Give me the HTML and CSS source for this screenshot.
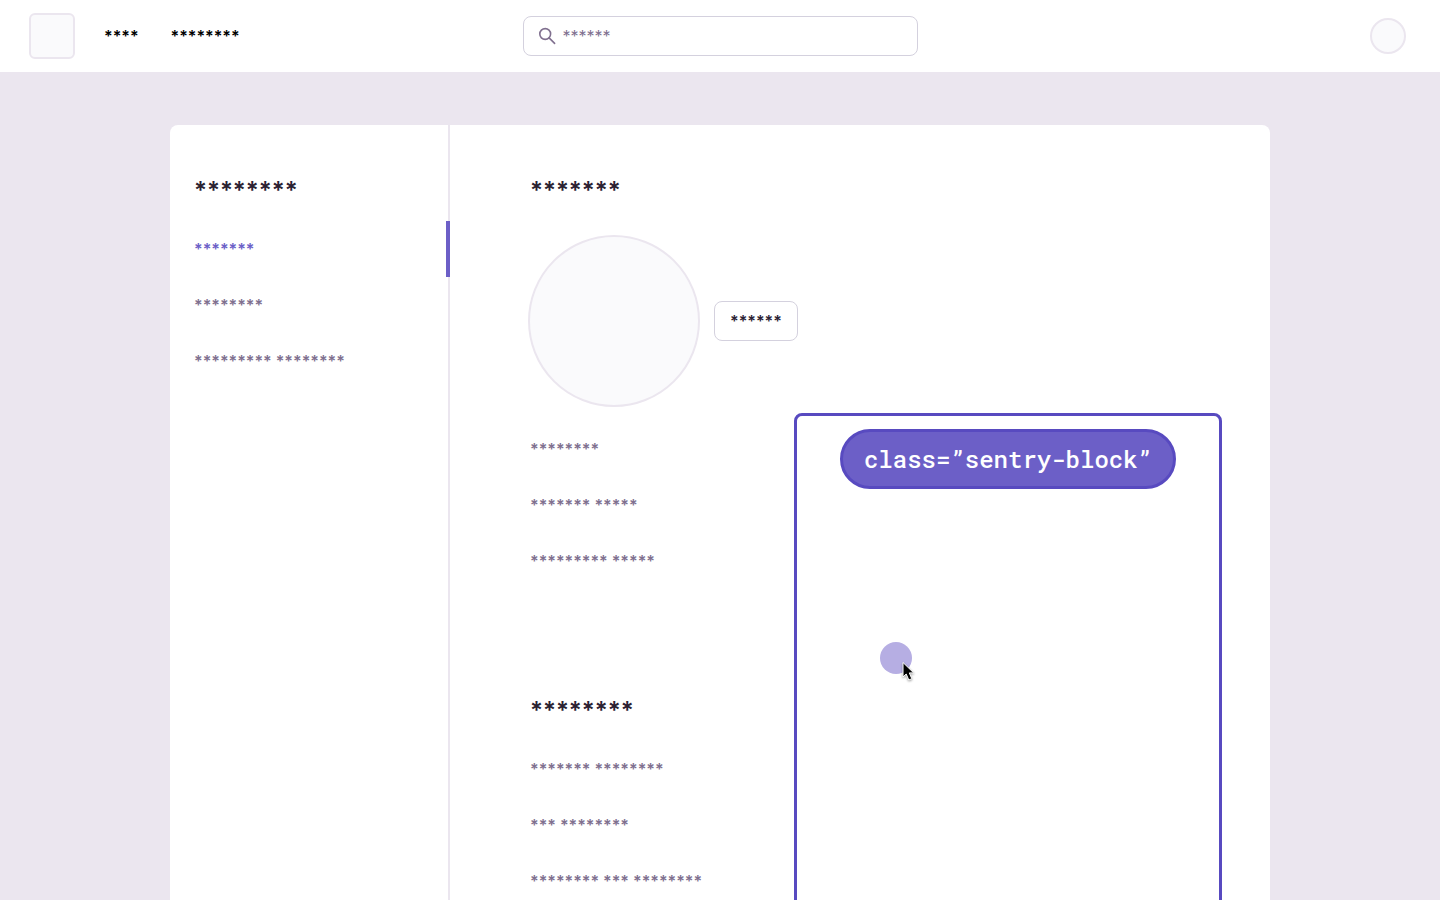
FILE: index.html
```html
<!DOCTYPE html>
<html lang="en">
<head>
<meta charset="utf-8">
<meta name="viewport" content="width=device-width, initial-scale=1">
<title>Account</title>
<link rel="stylesheet" href="styles.css">
</head>
<body>
<div class="page">
  <header class="topbar">
    <div class="topbar-start">
      <div class="logo"></div>
      <nav class="topnav">
        <a class="topnav-link" href="#">****</a>
        <a class="topnav-link" href="#">********</a>
      </nav>
    </div>
    <label class="search">
      <svg class="search-icon" viewBox="0 0 18 18" aria-hidden="true"><circle cx="6.2" cy="7" r="5.4"/><path d="M10.1 10.9L15.6 16.4"/></svg>
      <input class="search-input" type="text" placeholder="******" aria-label="Search">
    </label>
    <div class="topbar-end"><div class="user"></div></div>
  </header>

  <div class="card">
    <aside class="sidebar">
      <h2 class="title">********</h2>
      <nav class="menu">
        <a class="row row-active" href="#">*******</a>
        <a class="row" href="#">********</a>
        <a class="row" href="#">********* ********</a>
      </nav>
    </aside>
    <main class="content">
      <h1 class="title">*******</h1>
      <div class="profile">
        <div class="avatar"></div>
        <button class="button" type="button">******</button>
      </div>
      <div class="details">
        <div class="fields">
          <div class="row">********</div>
          <div class="row">******* *****</div>
          <div class="row">********* *****</div>
          <h2 class="title title-next">********</h2>
          <div class="row">******* ********</div>
          <div class="row">*** ********</div>
          <div class="row">******** *** ********</div>
        </div>
        <section class="block">
          <div class="tag">class=”sentry-block”</div>
          <div class="pointer">
            <svg class="cursor" viewBox="0 0 16 22" aria-hidden="true"><path d="M2 1.5V16L5.2 13L7.8 19L10.8 17.7L8.3 11.9H12.7Z"/></svg>
          </div>
        </section>
      </div>
    </main>
  </div>
</div>
</body>
</html>
```
FILE: styles.css
```css
* { box-sizing: border-box; }

body {
  margin: 0;
  background: #ebe6ef;
  color: #2b2233;
  font-family: Inter, "Liberation Sans", sans-serif;
  font-size: 16px;
  line-height: 24px;
}

a { color: inherit; text-decoration: none; }

.page {
  height: 100vh;
  display: flex;
  flex-direction: column;
  overflow: hidden;
}

.topbar {
  flex: none;
  display: grid;
  grid-template-columns: 1fr minmax(200px, 395px) 1fr;
  align-items: center;
  height: 72px;
  padding: 0 29px;
  background: #fff;
}

.topbar-start { display: flex; align-items: center; gap: 29px; }

.logo {
  width: 46px;
  height: 46px;
  border: 2px solid #ebe6ef;
  border-radius: 6px;
  background: #fafafc;
}

.topnav { display: flex; gap: 32px; color: #000; font-weight: 600; }

.search {
  display: flex;
  align-items: center;
  gap: 6px;
  height: 40px;
  padding: 0 15px;
  border: 1px solid #d4d1de;
  border-radius: 8px;
}

.search-icon {
  flex: none;
  width: 18px;
  height: 18px;
  fill: none;
  stroke: #80708f;
  stroke-width: 1.6;
  stroke-linecap: round;
}

.search-input {
  flex: 1;
  min-width: 0;
  padding: 0;
  border: 0;
  outline: 0;
  background: none;
  font: inherit;
}

.search-input::placeholder { color: #80708f; opacity: 1; }

.topbar-end { display: flex; justify-content: flex-end; padding-right: 5px; }

.user {
  width: 36px;
  height: 36px;
  border: 2px solid #ebe6ef;
  border-radius: 50%;
  background: #fafafc;
}

.card {
  flex: none;
  display: grid;
  grid-template-columns: 280px 1fr;
  width: calc(100% - 48px);
  max-width: 1100px;
  margin: 53px auto 0;
  border-radius: 8px;
  background: #fff;
}

.title {
  margin: 0 0 14px;
  font-size: 24px;
  line-height: 32px;
  font-weight: 600;
}

.sidebar {
  padding: 50px 0 0 24px;
  border-right: 2px solid #ebe6ef;
}

.menu { margin-right: -2px; }

.row {
  display: flex;
  align-items: center;
  height: 56px;
  color: #80708f;
  font-weight: 600;
}

.row-active { border-right: 4px solid #6c5fc7; color: #6c5fc7; }

.content { padding: 50px 48px 0 80px; }

.profile {
  display: flex;
  align-items: center;
  gap: 14px;
  margin: 28px 0 6px -2px;
}

.avatar {
  width: 172px;
  height: 172px;
  border: 2px solid #ebe6ef;
  border-radius: 50%;
  background: #fafafc;
}

.button {
  height: 40px;
  padding: 0 15px;
  border: 1px solid #d4d1de;
  border-radius: 8px;
  background: #fff;
  color: #2b2233;
  font: inherit;
  font-weight: 600;
}

.details { display: grid; grid-template-columns: 264px 1fr; }

.fields { padding: 8px 0 56px; }

.title-next { margin-top: 106px; }

.block {
  position: relative;
  display: flex;
  flex-direction: column;
  align-items: center;
  padding-top: 13px;
  border: 3px solid #584ac0;
  border-radius: 8px;
}

.tag {
  padding: 11px 21px;
  border: 3px solid #584ac0;
  border-radius: 30px;
  background: #6c5fc7;
  color: #fff;
  font-family: "Roboto Mono", "DejaVu Sans Mono", monospace;
  font-size: 24px;
  font-weight: 500;
  line-height: 32px;
  white-space: nowrap;
}

.pointer {
  position: absolute;
  top: 226px;
  left: 83px;
  width: 32px;
  height: 32px;
  border-radius: 50%;
  background: #b6aee3;
}

.cursor {
  position: absolute;
  top: 19px;
  left: 21px;
  width: 16px;
  height: 22px;
  fill: #000;
  stroke: #fff;
  stroke-width: 1;
  filter: drop-shadow(0 1px 1px rgba(0, 0, 0, 0.4));
}
```
